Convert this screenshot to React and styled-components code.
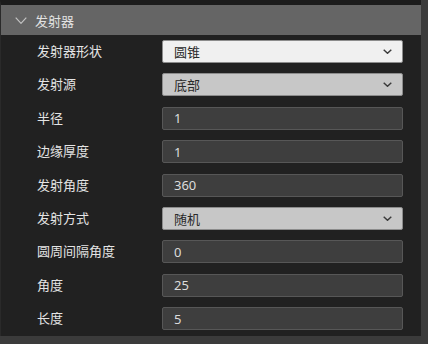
import React from 'react';
import styled, { createGlobalStyle } from 'styled-components';

const GlobalStyle = createGlobalStyle`
  html, body {
    margin: 0;
    padding: 0;
    background: #3b3b3b;
    font-family: 'Noto Sans', 'Noto Sans CJK SC', sans-serif;
  }
`;

const Panel = styled.div`
  width: 421px;
  height: 336px;
  box-sizing: border-box;
  background: #212121;
  border-top: 5px solid #1c1c1c;
  border-left: 1px solid #2a2a2a;
  overflow: hidden;
`;

const Header = styled.div`
  height: 30px;
  display: flex;
  align-items: center;
  gap: 8px;
  padding-left: 14px;
  background: #656565;
  color: #e2e2e2;
  font-size: 13px;
`;

const Fields = styled.div`
  display: flex;
  flex-direction: column;
  gap: 10.375px;
  padding-top: 5px;
`;

const Row = styled.div`
  display: grid;
  grid-template-columns: 125px 241px;
  align-items: center;
  height: 23px;
  padding-left: 36px;
`;

const Label = styled.span`
  color: #e4e4e4;
  font-size: 13px;
  line-height: 23px;
`;

const Box = styled.div`
  box-sizing: border-box;
  height: 23px;
  display: flex;
  align-items: center;
  justify-content: space-between;
  padding: 0 10px 0 11px;
  border-radius: 2px;
  font-size: 13px;
`;

const Select = styled(Box)`
  background: ${(p) => (p.$light ? '#f0f0f0' : '#c7c7c7')};
  border: 1px solid #8c8c8c;
  color: #2a2a2a;
`;

const Input = styled(Box)`
  background: #3e3e3e;
  border: 1px solid #575757;
  color: #dcdcdc;
`;

const Chevron = ({ w, h, color, sw }) => (
  <svg width={w} height={h} viewBox={`0 0 ${w} ${h}`} fill="none">
    <path
      d={`M0.7 0.7 L${w / 2} ${h - 0.7} L${w - 0.7} 0.7`}
      stroke={color}
      strokeWidth={sw}
    />
  </svg>
);

const rows = [
  { label: '发射器形状', value: '圆锥', type: 'select', light: true },
  { label: '发射源', value: '底部', type: 'select' },
  { label: '半径', value: '1' },
  { label: '边缘厚度', value: '1' },
  { label: '发射角度', value: '360' },
  { label: '发射方式', value: '随机', type: 'select' },
  { label: '圆周间隔角度', value: '0' },
  { label: '角度', value: '25' },
  { label: '长度', value: '5' },
];

export default function App() {
  return (
    <>
      <GlobalStyle />
      <Panel>
        <Header>
          <Chevron w={12} h={7} color="#c4c4c4" sw={1.2} />
          <span>发射器</span>
        </Header>
        <Fields>
          {rows.map((r) => (
            <Row key={r.label}>
              <Label>{r.label}</Label>
              {r.type === 'select' ? (
                <Select $light={r.light}>
                  <span>{r.value}</span>
                  <Chevron w={9} h={5} color="#3a3a3a" sw={1.4} />
                </Select>
              ) : (
                <Input>{r.value}</Input>
              )}
            </Row>
          ))}
        </Fields>
      </Panel>
    </>
  );
}
